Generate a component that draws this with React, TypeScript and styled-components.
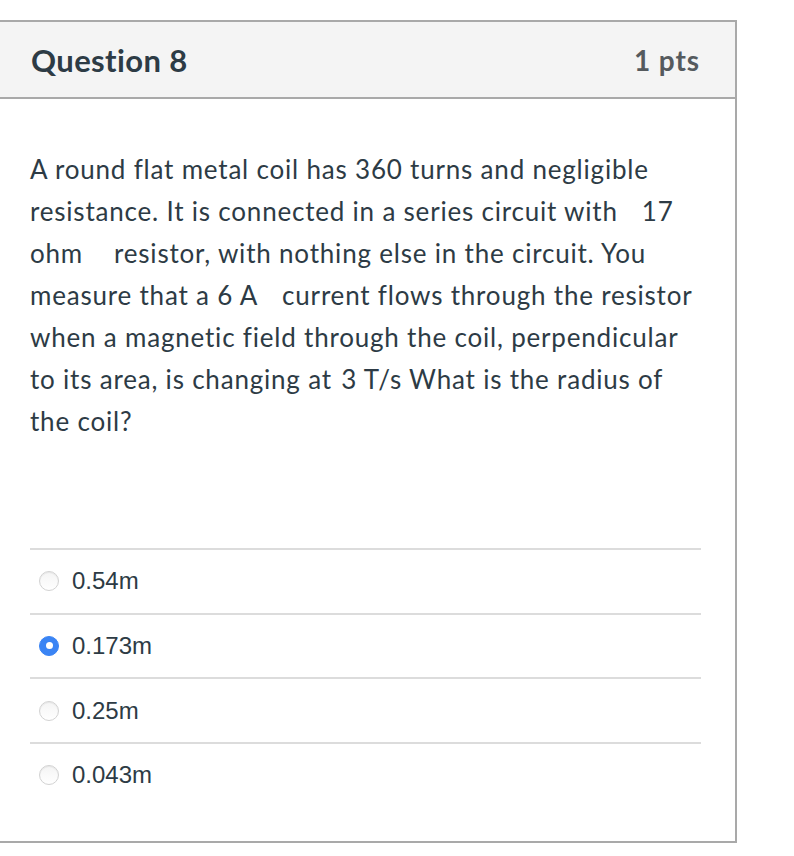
import React, { FC } from 'react';
import styled, { createGlobalStyle } from 'styled-components';

const GlobalStyle = createGlobalStyle`
  body {
    margin: 0;
    background: #fff;
    font-family: Lato, "Noto Sans", sans-serif;
  }
`;

const Page = styled.div`
  padding-top: 20px;
`;

const Card = styled.div`
  width: 737px;
  box-sizing: border-box;
  border: 2px solid #a9a9a9;
  border-left: none;
`;

const Header = styled.div`
  height: 75px;
  display: flex;
  align-items: center;
  justify-content: space-between;
  padding: 0 35px 0 31px;
  background: #f4f4f4;
  border-bottom: 2px solid #a9a9a9;
`;

const Title = styled.h2`
  margin: 0;
  font-family: Lato, sans-serif;
  font-weight: 700;
  font-size: 31px;
  letter-spacing: 0.4px;
  color: #2d3b45;
`;

const Points = styled.div`
  font-family: Lato, sans-serif;
  font-weight: 700;
  font-size: 28px;
  letter-spacing: 0.9px;
  color: #555a5e;
`;

const Body = styled.div`
  padding: 49px 34px 34px 30px;
`;

const QuestionText = styled.p`
  margin: 0 0 106px;
  font-family: Lato, sans-serif;
  font-size: 26px;
  letter-spacing: 0.8px;
  line-height: 42px;
  color: #2d3b45;
`;

const Gap = styled.span<{ $w: number }>`
  display: inline-block;
  width: ${(p) => p.$w}px;
`;

const Answers = styled.div`
  display: flex;
  flex-direction: column;
`;

const AnswerRow = styled.label`
  display: flex;
  align-items: center;
  gap: 13px;
  height: 62.67px;
  padding-left: 9px;
  border-top: 2px solid #dcdcdc;
`;

const Radio = styled.span<{ $checked?: boolean }>`
  position: relative;
  width: 20px;
  height: 20px;
  box-sizing: border-box;
  border-radius: 50%;
  border: 1px solid ${(p) => (p.$checked ? '#3a84f4' : '#d2d2d2')};
  background: ${(p) => (p.$checked ? '#3a84f4' : 'linear-gradient(#f4f4f4, #fff)')};
  box-shadow: ${(p) => (p.$checked ? 'none' : 'inset 0 1px 1px rgba(0,0,0,0.06)')};

  &::after {
    content: '';
    display: ${(p) => (p.$checked ? 'block' : 'none')};
    position: absolute;
    left: 50%;
    top: 50%;
    width: 7px;
    height: 7px;
    margin: -3.5px 0 0 -3.5px;
    border-radius: 50%;
    background: #fff;
  }
`;

const AnswerText = styled.span`
  font-family: "Liberation Sans", Arial, sans-serif;
  font-size: 24px;
  color: #2d3b45;
`;

const answers = [
  { text: '0.54m', checked: false },
  { text: '0.173m', checked: true },
  { text: '0.25m', checked: false },
  { text: '0.043m', checked: false },
];

const App: FC = () => (
  <>
    <GlobalStyle />
    <Page>
      <Card>
        <Header>
          <Title>Question 8</Title>
          <Points>1 pts</Points>
        </Header>
        <Body>
          <QuestionText>
            A round flat metal coil has 360 turns and negligible
            <br />
            resistance. It is connected in a series circuit with
            <Gap $w={24} />
            17
            <br />
            ohm
            <Gap $w={31} />
            resistor, with nothing else in the circuit. You
            <br />
            measure that a 6 A<Gap $w={24} />
            current flows through the resistor
            <br />
            when a magnetic field through the coil, perpendicular
            <br />
            to its area, is changing at <Gap $w={2} />3 T/s What is the radius of
            <br />
            the coil?
          </QuestionText>
          <Answers>
            {answers.map((a) => (
              <AnswerRow key={a.text}>
                <Radio $checked={a.checked} />
                <AnswerText>{a.text}</AnswerText>
              </AnswerRow>
            ))}
          </Answers>
        </Body>
      </Card>
    </Page>
  </>
);

export default App;
